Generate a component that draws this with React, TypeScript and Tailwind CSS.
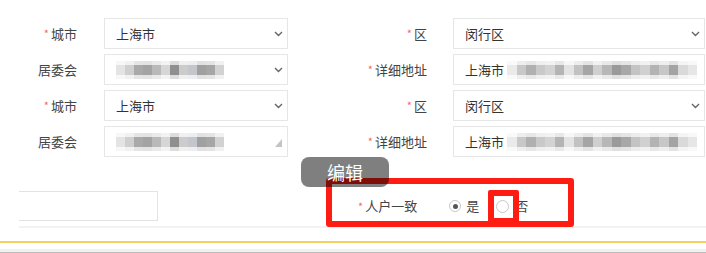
import React from "react";

const FONT = { fontFamily: '"Noto Sans CJK SC", "Noto Sans", sans-serif' };

function Chevron() {
  return (
    <svg width="9" height="6" viewBox="0 0 9 6" className="shrink-0">
      <path d="M1 1 L4.5 4.5 L8 1" fill="none" stroke="#666" strokeWidth="1.4" />
    </svg>
  );
}

const shadesA = ["#e4e4e4", "#cfcfcf", "#a9a9a9", "#a3a3a3", "#b9b9b9", "#d6d6d6", "#8f8f8f", "#cccccc", "#c3c7cc", "#a0a0a0", "#a6a6a6", "#d2d2d2"];
const shadesB = ["#eaeaea", "#c8c8c8", "#b0b0b0", "#c9c9c9", "#d3d3d3", "#b4b4b4", "#e3e3e3", "#c2c2c2", "#a5a5a5", "#cfcfcf", "#b7b7b7", "#9a9a9a", "#a8a8a8", "#c4c4c4", "#d0d0d0", "#b3b3b3", "#c7c7c7", "#a3a3a3", "#d9d9d9", "#e6e6e6"];

function Mosaic({ shades, block }: { shades: string[]; block: number }) {
  return (
    <div className="flex flex-col blur-[0.6px]">
      <div className="flex h-[4px] opacity-30">
        {shades.map((c, i) => (
          <div key={i} style={{ width: block, background: c }} />
        ))}
      </div>
      <div className="flex h-[10px]">
        {shades.map((c, i) => (
          <div key={i} style={{ width: block, background: c }} />
        ))}
      </div>
      <div className="flex h-[4px] opacity-30">
        {shades.map((c, i) => (
          <div key={i} style={{ width: block, background: c }} />
        ))}
      </div>
    </div>
  );
}

function Label({ text, req, w }: { text: string; req?: boolean; w: string }) {
  return (
    <div className={`${w} shrink-0 flex justify-end items-center text-[13px] text-[#444]`}>
      {req && <span className="text-[#f56c6c] text-[11px] mr-[2px] leading-none">*</span>}
      <span>{text}</span>
    </div>
  );
}

function Box({ w, children, chevron = true, disabled = false }: { w: string; children: React.ReactNode; chevron?: boolean; disabled?: boolean }) {
  return (
    <div className={`${w} h-[31px] shrink-0 border border-[#e6e6e6] bg-white flex items-center pl-[11px] pr-[4px] text-[13px] text-[#333]`}>
      <div className="flex-1 flex items-center overflow-hidden">{children}</div>
      {chevron && !disabled && <Chevron />}
      {disabled && (
        <div className="w-[7px] h-[8px] bg-[#c4c4c4] mr-[1px] mt-[3px]" style={{ clipPath: "polygon(100% 0, 100% 100%, 0 100%)" }} />
      )}
    </div>
  );
}

function Row({ left, right }: { left: React.ReactNode; right: React.ReactNode }) {
  return <div className="flex items-center">{left}{right}</div>;
}

export default function App() {
  return (
    <div className="relative w-[706px] h-[253px] bg-white overflow-hidden" style={FONT}>
      <div className="pt-[18px] flex flex-col gap-[5px]">
        <Row
          left={<><Label text="城市" req w="w-[77px]" /><div className="w-[27px]" /><Box w="w-[184px]">上海市</Box></>}
          right={<><Label text="区" req w="w-[139px]" /><div className="w-[26px]" /><Box w="w-[252px]">闵行区</Box></>}
        />
        <Row
          left={<><Label text="居委会" w="w-[77px]" /><div className="w-[27px]" /><Box w="w-[184px]"><Mosaic shades={shadesA} block={9} /></Box></>}
          right={<><Label text="详细地址" req w="w-[139px]" /><div className="w-[26px]" /><Box w="w-[252px]" chevron={false}><span>上海市</span><span className="ml-[3px]"><Mosaic shades={shadesB} block={9.5} /></span></Box></>}
        />
        <Row
          left={<><Label text="城市" req w="w-[77px]" /><div className="w-[27px]" /><Box w="w-[184px]">上海市</Box></>}
          right={<><Label text="区" req w="w-[139px]" /><div className="w-[26px]" /><Box w="w-[252px]">闵行区</Box></>}
        />
        <Row
          left={<><Label text="居委会" w="w-[77px]" /><div className="w-[27px]" /><Box w="w-[184px]" disabled><Mosaic shades={shadesA} block={9} /></Box></>}
          right={<><Label text="详细地址" req w="w-[139px]" /><div className="w-[26px]" /><Box w="w-[252px]" chevron={false}><span>上海市</span><span className="ml-[3px]"><Mosaic shades={shadesB} block={9.5} /></span></Box></>}
        />
      </div>

      <div className="ml-[19px] mt-[34px] flex items-center border-b-2 border-[#f2f2f2] pb-[5px]">
        <div className="w-[139px] h-[30px] border-t border-r border-b border-[#e3e3e3]" />
        <div className="ml-[200px] flex items-center text-[13px] text-[#444]">
          <span className="text-[#f56c6c] text-[11px] mr-[2px] leading-none">*</span>
          <span>人户一致</span>
          <div className="ml-[32px] w-[12px] h-[12px] rounded-full border border-[#c8c8c8] flex items-center justify-center">
            <div className="w-[5px] h-[5px] rounded-full bg-[#555]" />
          </div>
          <span className="ml-[5px]">是</span>
          <div className="ml-[17px] w-[13px] h-[13px] rounded-full border border-[#c8c8c8]" />
          <span className="ml-[6px]">否</span>
        </div>
      </div>

      <div className="mt-[13px] h-[2px] bg-[#f8cf5a]" />
      <div className="mt-[6px] h-[3px] bg-[#f1f1f1]" />
      <div className="h-[1px] bg-[#bdbdbd]" />

      {/* annotation overlays */}
      <div className="absolute left-[326px] top-[178px] w-[248px] h-[49px] border-[6px] border-[#ff1c12] rounded-[3px]" />
      <div className="absolute left-[488px] top-[190px] w-[31px] h-[34px] border-[6px] border-[#ff1c12] rounded-[2px]" />
      <div className="absolute left-[301px] top-[157px] w-[88px] h-[30px] rounded-[8px] bg-black/50 flex items-center justify-center text-white text-[18px] leading-none">
        编辑
      </div>
    </div>
  );
}
